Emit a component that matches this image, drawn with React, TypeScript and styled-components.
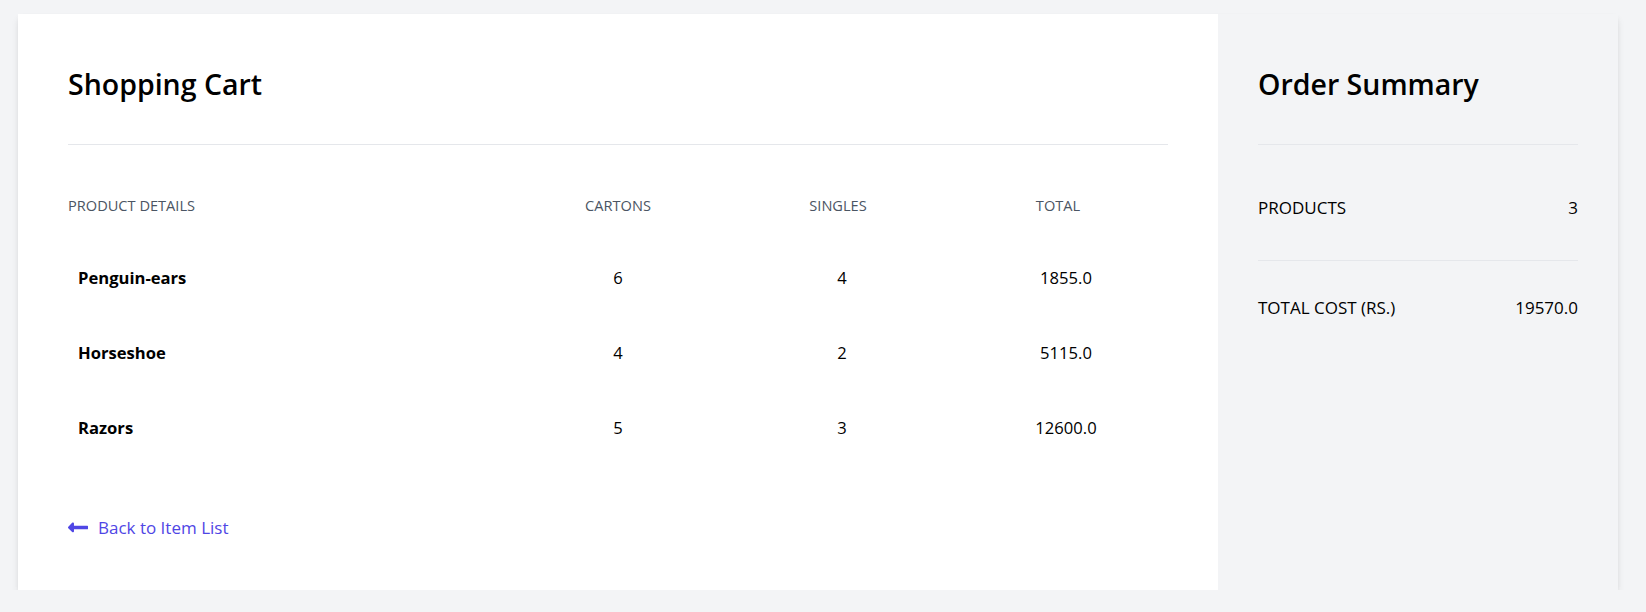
import React from "react";
import styled, { createGlobalStyle } from "styled-components";

const GlobalStyle = createGlobalStyle`
  body {
    margin: 0;
    background: #f3f4f6;
    font-family: "Open Sans", "Noto Sans", sans-serif;
    color: #000;
  }
`;

const Frame = styled.div`
  display: flex;
  width: 1600px;
  margin: 14px 0 0 18px;
  box-shadow: 0 5px 8px -1px rgba(0, 0, 0, 0.1), 0 2px 5px -2px rgba(0, 0, 0, 0.1);
`;

const CartPanel = styled.section`
  width: 1200px;
  box-sizing: border-box;
  padding: 50px;
  background: #fff;
`;

const SummaryPanel = styled.aside`
  width: 400px;
  box-sizing: border-box;
  padding: 50px 40px;
  background: #f3f4f6;
`;

const PanelTitle = styled.h2`
  margin: 0;
  padding-bottom: 40px;
  border-bottom: 1px solid #e5e7eb;
  font-size: 28.5px;
  line-height: 40px;
  font-weight: 600;
  color: #000;
`;

const HeadRow = styled.div`
  display: grid;
  grid-template-columns: 440px 220px 220px 220px;
  margin: 50px 0 25px;
`;

const HeadCell = styled.div<{ $center?: boolean }>`
  font-size: 14.6px;
  line-height: 20px;
  font-weight: 500;
  text-transform: uppercase;
  color: #4b5563;
  text-align: ${(p) => (p.$center ? "center" : "left")};
`;

const ItemRow = styled.div`
  display: grid;
  grid-template-columns: 448px 224px 224px 224px;
  margin: 0 -10px;
  padding: 25px 0;
  font-size: 16.6px;
  line-height: 25px;
`;

const ItemName = styled.div`
  padding-left: 20px;
  font-weight: 700;
`;

const ItemValue = styled.div`
  text-align: center;
  font-weight: 500;
`;

const BackLink = styled.a`
  display: flex;
  align-items: center;
  margin-top: 50px;
  color: #4f46e5;
  font-size: 17px;
  line-height: 25px;
  font-weight: 500;
  text-decoration: none;
  svg {
    width: 20px;
    margin-right: 10px;
    fill: currentColor;
  }
`;

const SummaryRow = styled.div<{ $top?: number; $bottom?: number }>`
  display: flex;
  justify-content: space-between;
  margin-top: ${(p) => p.$top ?? 0}px;
  margin-bottom: ${(p) => p.$bottom ?? 0}px;
  font-size: 17px;
  line-height: 25px;
  font-weight: 500;
  text-transform: uppercase;
`;

const TotalBlock = styled.div`
  border-top: 1px solid #e5e7eb;
  padding-top: 34px;
`;

const items = [
  { name: "Penguin-ears", cartons: 6, singles: 4, total: "1855.0" },
  { name: "Horseshoe", cartons: 4, singles: 2, total: "5115.0" },
  { name: "Razors", cartons: 5, singles: 3, total: "12600.0" },
];

const ArrowLeft = () => (
  <svg viewBox="0 0 448 512">
    <path d="M134.059 296H436c6.627 0 12-5.373 12-12v-56c0-6.627-5.373-12-12-12H134.059v-46.059c0-21.382-25.851-32.090-40.971-16.971L7.029 239.029c-9.373 9.373-9.373 24.569 0 33.941l86.059 86.059c15.119 15.119 40.971 4.411 40.971-16.971V296z" />
  </svg>
);

const App = () => {
  return (
    <>
      <GlobalStyle />
      <Frame>
        <CartPanel>
          <PanelTitle>Shopping Cart</PanelTitle>
          <HeadRow>
            <HeadCell>Product Details</HeadCell>
            <HeadCell $center>Cartons</HeadCell>
            <HeadCell $center>Singles</HeadCell>
            <HeadCell $center>Total</HeadCell>
          </HeadRow>
          {items.map((item) => (
            <ItemRow key={item.name}>
              <ItemName>{item.name}</ItemName>
              <ItemValue>{item.cartons}</ItemValue>
              <ItemValue>{item.singles}</ItemValue>
              <ItemValue>{item.total}</ItemValue>
            </ItemRow>
          ))}
          <BackLink href="#">
            <ArrowLeft />
            Back to Item List
          </BackLink>
        </CartPanel>
        <SummaryPanel>
          <PanelTitle>Order Summary</PanelTitle>
          <SummaryRow $top={50} $bottom={40}>
            <span>Products</span>
            <span>3</span>
          </SummaryRow>
          <TotalBlock>
            <SummaryRow>
              <span>Total cost (Rs.)</span>
              <span>19570.0</span>
            </SummaryRow>
          </TotalBlock>
        </SummaryPanel>
      </Frame>
    </>
  );
};

export default App;
